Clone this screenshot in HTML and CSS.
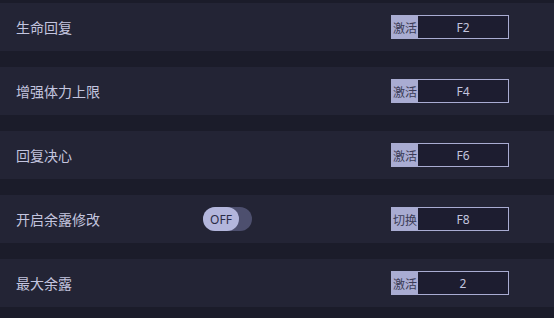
FILE: index.html
```html
<!DOCTYPE html>
<html lang="zh-CN">
<head>
    <meta charset="UTF-8">
    <title>修改器</title>
    <link rel="stylesheet" href="styles.css">
</head>
<body>
    <div class="list">
        <div class="row">
            <span class="name">生命回复</span>
            <div class="key"><span class="act">激活</span><span class="hot">F2</span></div>
        </div>
        <div class="row">
            <span class="name">增强体力上限</span>
            <div class="key"><span class="act">激活</span><span class="hot">F4</span></div>
        </div>
        <div class="row">
            <span class="name">回复决心</span>
            <div class="key"><span class="act">激活</span><span class="hot">F6</span></div>
        </div>
        <div class="row">
            <span class="name">开启余露修改</span>
            <div class="toggle"><span class="thumb">OFF</span></div>
            <div class="key"><span class="act">切换</span><span class="hot">F8</span></div>
        </div>
        <div class="row">
            <span class="name">最大余露</span>
            <div class="key"><span class="act">激活</span><span class="hot">2</span></div>
        </div>
    </div>
</body>
</html>
```

FILE: styles.css
```css
html{
    font-family: "Noto Sans CJK SC", "Noto Sans", sans-serif;
}

body{
    margin: 0;
    width: 554px;
    height: 318px;
    background-color: #1b1c2a;
    overflow: hidden;
}

.list{
    display: flex;
    flex-direction: column;
    gap: 16px;
    padding-top: 3px;
}

.row{
    display: flex;
    align-items: center;
    height: 48px;
    padding-left: 16px;
    background-color: #232435;
}

.name{
    width: 187px;
    font-size: 14px;
    color: #c3c5df;
}

.toggle{
    width: 49px;
    height: 24px;
    border-radius: 12px;
    background-color: #4d4f6e;
}

.thumb{
    display: flex;
    align-items: center;
    justify-content: center;
    width: 36px;
    height: 24px;
    border-radius: 12px;
    background-color: #b3b6dc;
    color: #2a2b45;
    font-family: "Noto Sans", sans-serif;
    font-size: 12px;
}

.key{
    display: flex;
    margin-left: auto;
    margin-right: 45px;
    width: 118px;
    height: 24px;
    box-sizing: border-box;
    border: 1px solid #a9acd2;
    background-color: #1d1d30;
}

.act{
    display: flex;
    align-items: center;
    justify-content: center;
    width: 26px;
    background-color: #a9acd2;
    color: #3b3c57;
    font-size: 12px;
}

.hot{
    flex: 1;
    display: flex;
    align-items: center;
    justify-content: center;
    color: #c3c5df;
    font-family: "Noto Sans", sans-serif;
    font-size: 12px;
}
```
